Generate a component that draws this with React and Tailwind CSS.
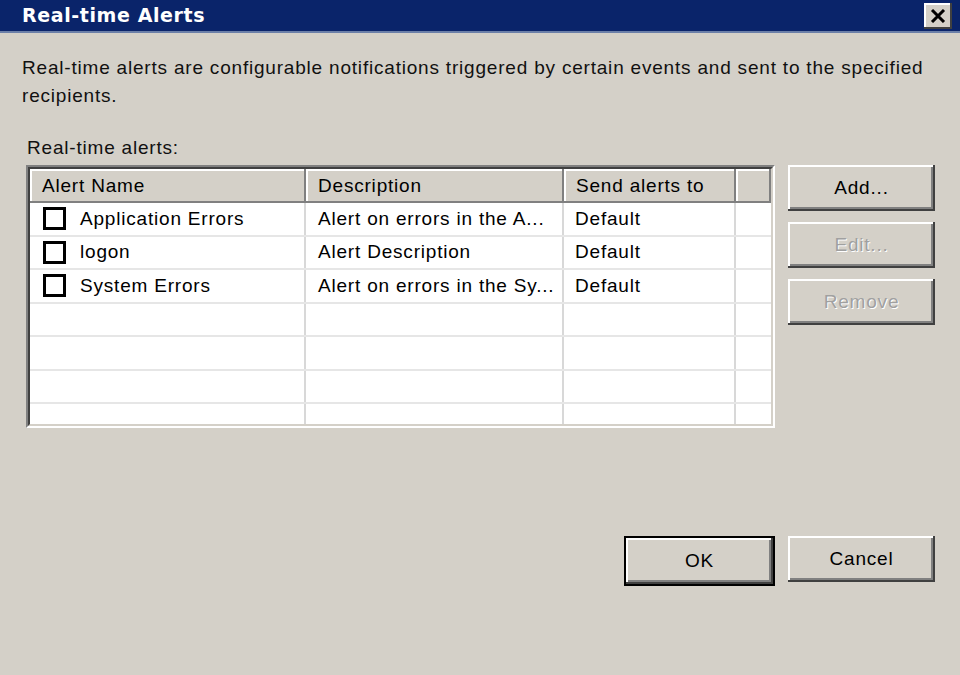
import React from "react";

const font = { fontFamily: '"Liberation Sans", Arial, sans-serif' };

function Btn({ children, disabled, className = "" }) {
  return (
    <div
      className={`flex items-center justify-center w-[147px] h-[46px] bg-[#d4d0c8] text-[19px] shadow-[inset_-2px_-2px_0_#404040,inset_2px_2px_0_#ffffff,inset_-4px_-4px_0_#808080] ${
        disabled ? "text-[#a0a0a0] [text-shadow:1px_1px_0_#ffffff]" : "text-black"
      } ${className}`}
    >
      {children}
    </div>
  );
}

const rows = [
  ["Application Errors", "Alert on errors in the A...", "Default"],
  ["logon", "Alert Description", "Default"],
  ["System Errors", "Alert on errors in the Sy...", "Default"],
  null,
  null,
  null,
  null,
];

function HeaderCell({ children, w }) {
  return (
    <div
      className={`${w} h-[34px] shrink-0 bg-[#d4d0c8] flex items-center pl-[12px] text-[19px] text-black shadow-[inset_-2px_-2px_0_#808080,inset_2px_2px_0_#ffffff]`}
    >
      {children}
    </div>
  );
}

export default function App() {
  return (
    <div className="w-[960px] h-[675px] bg-[#d4d0c8] flex flex-col overflow-hidden tracking-[0.8px]" style={font}>
      <div className="h-[33px] shrink-0 bg-[#0a246a] border-b-2 border-[#6b7fa8] flex items-center justify-between pl-[22px] pr-[8px]">
        <span
          className="text-white font-bold text-[19px] leading-none tracking-[0.6px]"
          style={{ fontFamily: '"DejaVu Sans", Verdana, sans-serif' }}
        >
          Real-time Alerts
        </span>
        <div className="w-[28px] h-[26px] bg-[#d4d0c8] flex items-center justify-center shadow-[inset_-2px_-2px_0_#404040,inset_2px_2px_0_#ffffff]">
          <svg width="16" height="14" viewBox="0 0 16 14">
            <path d="M2 1 L14 13 M14 1 L2 13" stroke="#000" strokeWidth="3" />
          </svg>
        </div>
      </div>

      <div className="ml-[22px] w-[916px] mt-[21px] text-[19px] leading-[28px] text-[#111]">
        Real-time alerts are configurable notifications triggered by certain events and sent to the specified recipients.
      </div>

      <div className="ml-[27px] mt-[24px] text-[19px] leading-[28px] text-[#111]">Real-time alerts:</div>

      <div className="flex ml-[26px] mt-[3px] gap-[13px]">
        <div className="w-[749px] h-[263px] border-2 border-t-[#808080] border-l-[#808080] border-b-white border-r-white">
          <div className="w-full h-full border-2 border-t-[#404040] border-l-[#404040] border-b-[#d4d0c8] border-r-[#d4d0c8] bg-white overflow-hidden">
            <div className="flex">
              <HeaderCell w="w-[276px]">Alert Name</HeaderCell>
              <HeaderCell w="w-[258px]">Description</HeaderCell>
              <HeaderCell w="w-[172px]">Send alerts to</HeaderCell>
              <HeaderCell w="flex-1">{""}</HeaderCell>
            </div>
            {rows.map((r, i) => (
              <div key={i} className="flex h-[33.5px] border-b-2 border-[#e6e6e6] text-[19px] text-black">
                <div className="w-[276px] shrink-0 flex items-center pl-[13px] border-r-2 border-[#d8d8d8]">
                  {r && (
                    <>
                      <div className="w-[23px] h-[23px] border-[3px] border-black bg-white mr-[14px]" />
                      <span>{r[0]}</span>
                    </>
                  )}
                </div>
                <div className="w-[258px] shrink-0 flex items-center pl-[12px] border-r-2 border-[#d8d8d8] whitespace-nowrap overflow-hidden">
                  {r && r[1]}
                </div>
                <div className="w-[172px] shrink-0 flex items-center pl-[11px] border-r-2 border-[#d8d8d8]">
                  {r && r[2]}
                </div>
                <div className="flex-1" />
              </div>
            ))}
          </div>
        </div>
        <div className="flex flex-col gap-[11px]">
          <Btn>Add...</Btn>
          <Btn disabled>Edit...</Btn>
          <Btn disabled>Remove</Btn>
        </div>
      </div>

      <div className="flex justify-end gap-[13px] mt-[108px] pr-[25px]">
        <div className="border-2 border-black">
          <Btn className="w-[143px] h-[42px]">OK</Btn>
        </div>
        <Btn>Cancel</Btn>
      </div>
    </div>
  );
}
